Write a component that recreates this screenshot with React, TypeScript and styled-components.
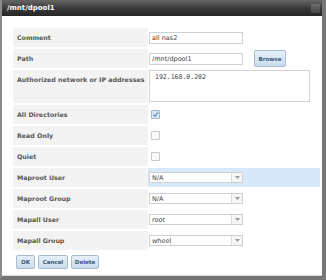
import React from 'react';
import styled, { createGlobalStyle } from 'styled-components';

const Global = createGlobalStyle`
  html, body { margin: 0; padding: 0; background: #fff; }
  body { width: 326px; height: 280px; overflow: hidden; }
`;

const Dialog = styled.div`
  width: 326px;
  height: 280px;
  box-sizing: border-box;
  border-left: 2px solid #8a8a8a;
  border-right: 4px solid #767676;
  border-bottom: 4px solid #747474;
  display: flex;
  flex-direction: column;
  background: #fff;
  font-family: "DejaVu Sans", sans-serif;
`;

const TitleBar = styled.div`
  height: 16px;
  flex: none;
  background: linear-gradient(#666, #3a3a3a 50%, #262626);
  display: flex;
  align-items: center;
  justify-content: space-between;
  padding: 0 2px 0 5px;
  color: #fff;
  font-weight: bold;
  font-size: 7px;
`;

const CloseBox = styled.div`
  width: 9px;
  height: 9px;
  border-radius: 1px;
  background: linear-gradient(#7a7a7a, #555);
  opacity: 0.7;
`;

const Content = styled.div`
  flex: 1;
  padding: 12px 2px 0 11px;
  border-bottom: 1px solid #d8d8d8;
`;

const Form = styled.div`
  display: grid;
  grid-template-columns: 135px 1fr;
  row-gap: 2px;
`;

const Label = styled.div<{ $tall?: boolean }>`
  background: #f3f3f3;
  height: ${p => (p.$tall ? 33 : 19)}px;
  display: flex;
  align-items: ${p => (p.$tall ? 'flex-start' : 'center')};
  padding: ${p => (p.$tall ? '6px 0 0 4px' : '0 0 0 4px')};
  box-sizing: border-box;
  font-size: 6.3px;
  font-weight: bold;
  color: #585858;
  white-space: nowrap;
`;

const Value = styled.div<{ $hl?: boolean; $tall?: boolean }>`
  height: ${p => (p.$tall ? 33 : 19)}px;
  background: ${p => (p.$hl ? '#d7e8fb' : 'transparent')};
  display: flex;
  align-items: ${p => (p.$tall ? 'flex-start' : 'center')};
  padding-left: 1px;
  gap: 11px;
`;

const TextInput = styled.div`
  width: 94px;
  height: 12px;
  box-sizing: border-box;
  border: 1px solid #cfcfcf;
  background: #fff;
  font-size: 6.5px;
  color: #444;
  padding-left: 2px;
  display: flex;
  align-items: center;
`;

const TextArea = styled.div`
  width: 161px;
  height: 32px;
  box-sizing: border-box;
  border: 1px solid #d2d2d2;
  background: #fff;
  font-family: "DejaVu Sans Mono", monospace;
  font-size: 6.5px;
  color: #444;
  padding: 2px 0 0 5px;
`;

const Btn = styled.div<{ $w: number; $h?: number }>`
  width: ${p => p.$w}px;
  height: ${p => p.$h ?? 14}px;
  box-sizing: border-box;
  border: 1px solid #a9bccf;
  border-radius: 2px;
  background: linear-gradient(#e6f0fa, #c9dcee);
  font-size: 5.5px;
  font-weight: bold;
  color: #3a5570;
  display: flex;
  align-items: center;
  justify-content: center;
`;

const Check = styled.div<{ $on?: boolean }>`
  width: 9px;
  height: 9px;
  margin-left: 2px;
  box-sizing: border-box;
  border: 1px solid ${p => (p.$on ? '#9fb8d2' : '#c8c8c8')};
  border-radius: 1px;
  background: ${p => (p.$on ? '#d8e6f4' : '#fafafa')};
  display: flex;
  align-items: center;
  justify-content: center;
`;

const Select = styled.div`
  width: 94px;
  height: 11px;
  box-sizing: border-box;
  border: 1px solid #cfcfcf;
  background: #fff;
  display: flex;
  font-size: 6.5px;
  color: #444;
`;

const SelectText = styled.div`
  flex: 1;
  padding-left: 2px;
  display: flex;
  align-items: center;
`;

const Arrow = styled.div`
  width: 10px;
  border-left: 1px solid #dcdcdc;
  background: #f6f6f6;
  display: flex;
  align-items: center;
  justify-content: center;
`;

const Buttons = styled.div`
  display: flex;
  gap: 3px;
  margin: 5px 0 0 3px;
`;

const Tri = () => (
  <svg width="5" height="3" viewBox="0 0 5 3">
    <path d="M0 0 L5 0 L2.5 3 Z" fill="#9a9a9a" />
  </svg>
);

const Tick = () => (
  <svg width="7" height="7" viewBox="0 0 7 7">
    <path d="M1.2 3.6 L3 5.3 L6 1.4" stroke="#6a8fb8" strokeWidth="1.2" fill="none" />
  </svg>
);

const SelectField = ({ v }: { v: string }) => (
  <Select>
    <SelectText>{v}</SelectText>
    <Arrow><Tri /></Arrow>
  </Select>
);

export default function App() {
  return (
    <>
      <Global />
      <Dialog>
        <TitleBar>
          <span>/mnt/dpool1</span>
          <CloseBox />
        </TitleBar>
        <Content>
          <Form>
            <Label>Comment</Label>
            <Value><TextInput>all nas2</TextInput></Value>
            <Label>Path</Label>
            <Value><TextInput>/mnt/dpool1</TextInput><Btn $w={32} $h={17}>Browse</Btn></Value>
            <Label $tall>Authorized network or IP addresses</Label>
            <Value $tall><TextArea>192.168.0.202</TextArea></Value>
            <Label>All Directories</Label>
            <Value><Check $on><Tick /></Check></Value>
            <Label>Read Only</Label>
            <Value><Check /></Value>
            <Label>Quiet</Label>
            <Value><Check /></Value>
            <Label>Maproot User</Label>
            <Value $hl><SelectField v="N/A" /></Value>
            <Label>Maproot Group</Label>
            <Value><SelectField v="N/A" /></Value>
            <Label>Mapall User</Label>
            <Value><SelectField v="root" /></Value>
            <Label>Mapall Group</Label>
            <Value><SelectField v="wheel" /></Value>
          </Form>
          <Buttons>
            <Btn $w={19}>OK</Btn>
            <Btn $w={30}>Cancel</Btn>
            <Btn $w={28}>Delete</Btn>
          </Buttons>
        </Content>
      </Dialog>
    </>
  );
}
